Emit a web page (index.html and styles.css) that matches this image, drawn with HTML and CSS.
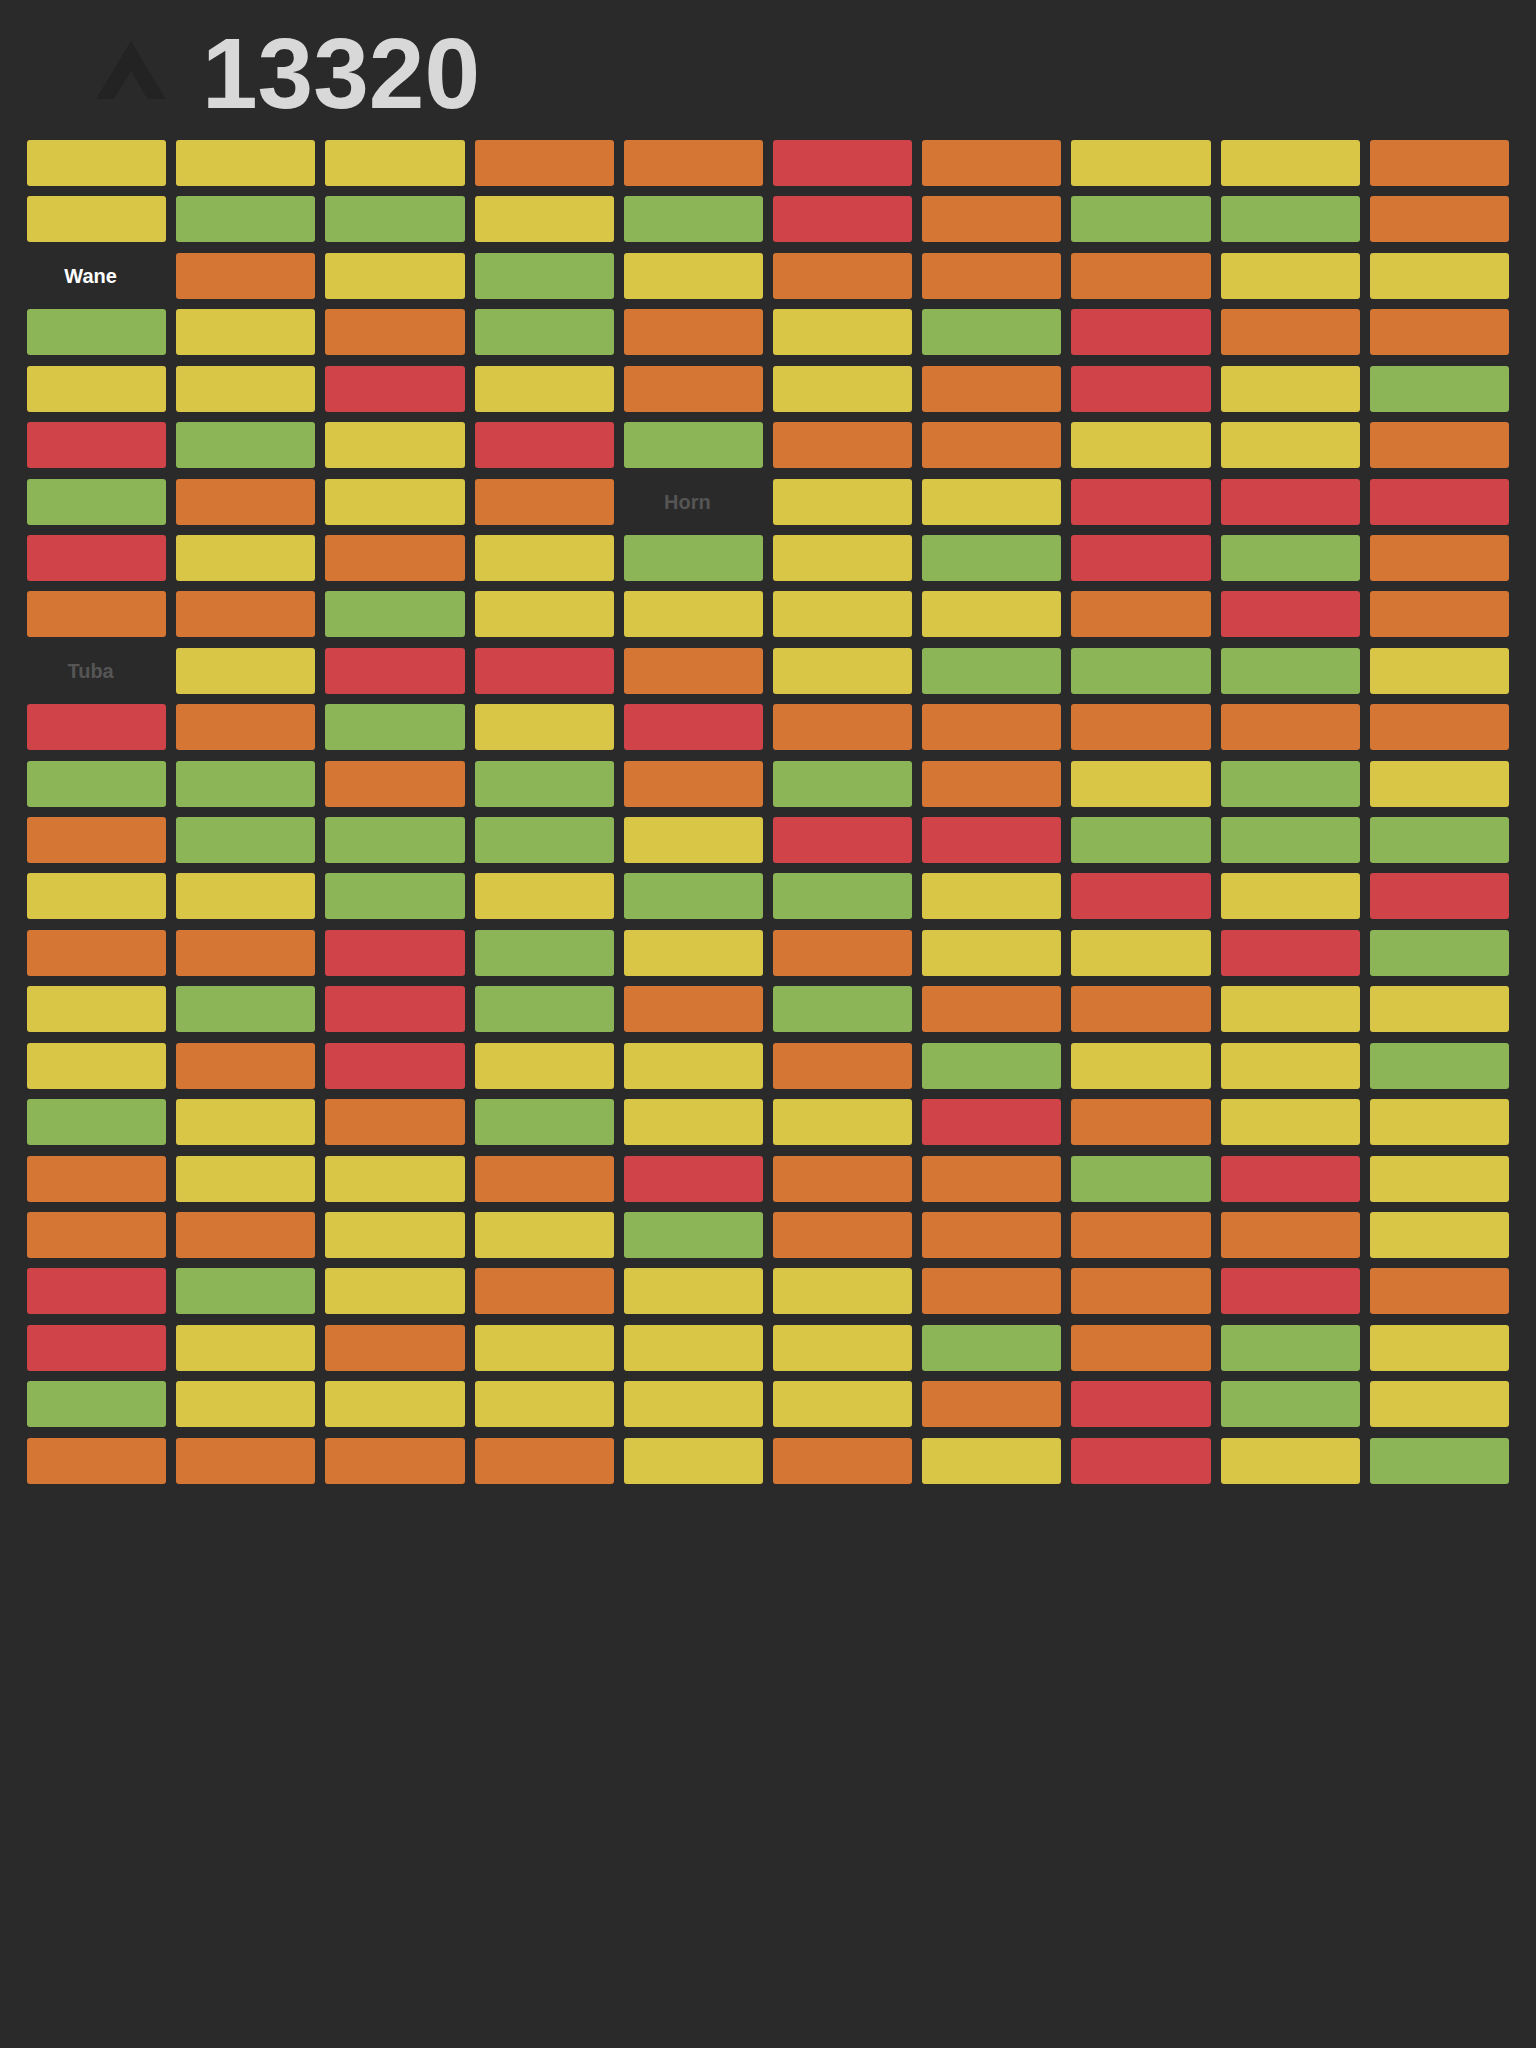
FILE: index.html
```html
<!DOCTYPE html>
<html lang="en">
<head>
  <meta charset="utf-8">
  <meta name="viewport" content="width=device-width, initial-scale=1">
  <title>Words</title>
  <link rel="stylesheet" href="styles.css">
</head>
<body>
  <header class="header">
    <button class="up" type="button" aria-label="Up">
      <svg class="up-icon" viewBox="0 0 70 58" aria-hidden="true">
        <path d="M35 0 69.5 58H51.5L35 30 18 58H0Z" fill="currentColor"/>
      </svg>
    </button>
    <h1 class="score">13320</h1>
  </header>
  <main class="board"></main>
  <script src="board.js"></script>
</body>
</html>
```
FILE: styles.css
```css
* {
  box-sizing: border-box;
}

body {
  margin: 0;
  min-height: 100vh;
  background: #2a2a2a;
  font-family: "Liberation Sans", Helvetica, Arial, sans-serif;
}

.header {
  display: flex;
  align-items: center;
  gap: 36px;
  height: 140px;
  padding: 0 96px;
}

.up {
  display: flex;
  padding: 0;
  border: 0;
  background: none;
  color: #232323;
}

.up-icon {
  width: 70px;
  height: 58px;
}

.score {
  margin: 0;
  padding-top: 6px;
  color: #d8d8d8;
  font-size: 100px;
  font-weight: bold;
  line-height: 100px;
}

.board {
  display: grid;
  grid-template-columns: repeat(10, 1fr);
  grid-auto-rows: 46px;
  align-content: space-between;
  column-gap: 10px;
  margin: 0 27px;
  aspect-ratio: 1482 / 1344;
}

.tile {
  padding: 0 12px 0 0;
  border: 0;
  border-radius: 3px;
  background: none;
  color: #555;
  font: bold 20px/46px "Liberation Sans", Helvetica, Arial, sans-serif;
  text-align: center;
}

.yellow { background: #d9c546; }
.orange { background: #d67634; }
.red { background: #d04349; }
.green { background: #8cb557; }
.current { color: #fff; }
```
FILE: board.js
```js
const colors = { Y: "yellow", O: "orange", R: "red", G: "green" };

// One string per row; a dot is an uncovered tile that shows its word.
const rows = [
  "YYYOOROYYO",
  "YGGYGROGGO",
  ".OYGYOOOYY",
  "GYOGOYGROO",
  "YYRYOYORYG",
  "RGYRGOOYYO",
  "GOYO.YYRRR",
  "RYOYGYGRGO",
  "OOGYYYYORO",
  ".YRROYGGGY",
  "ROGYROOOOO",
  "GGOGOGOYGY",
  "OGGGYRRGGG",
  "YYGYGGYRYR",
  "OORGYOYYRG",
  "YGRGOGOOYY",
  "YORYYOGYYG",
  "GYOGYYROYY",
  "OYYOROOGRY",
  "OOYYGOOOOY",
  "RGYOYYOORO",
  "RYOYYYGOGY",
  "GYYYYYORGY",
  "OOOOYOYRYG"
];

const words = [
  { text: "Wane", current: true },
  { text: "Horn" },
  { text: "Tuba" }
];

const board = document.querySelector(".board");
let next = 0;

for (const cell of rows.join("")) {
  const tile = document.createElement("button");
  tile.type = "button";
  tile.className = "tile";
  if (cell === ".") {
    const word = words[next++];
    tile.textContent = word.text;
    if (word.current) tile.classList.add("current");
  } else {
    tile.classList.add(colors[cell]);
    tile.setAttribute("aria-label", "Covered " + colors[cell] + " tile");
  }
  board.append(tile);
}
```
